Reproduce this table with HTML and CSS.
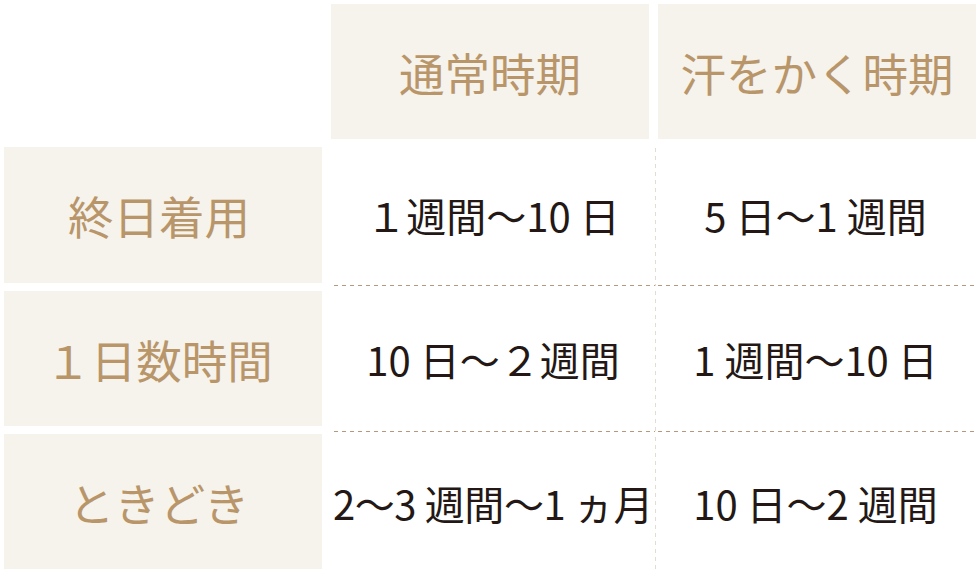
FILE: index.html
```html
<!DOCTYPE html>
<html lang="ja">
<head>
<meta charset="utf-8">
<link rel="stylesheet" href="styles.css">
</head>
<body>
<div class="table">
  <div class="corner"></div>
  <div class="head">通常時期</div>
  <div class="head">汗をかく時期</div>

  <div class="rowhead">終日着用</div>
  <div class="data c2 r1">１週間〜10 日</div>
  <div class="data c3 r1">5 日〜1 週間</div>

  <div class="rowhead">１日数時間</div>
  <div class="data c2 r2">10 日〜２週間</div>
  <div class="data c3 r2">1 週間〜10 日</div>

  <div class="rowhead">ときどき</div>
  <div class="data c2 r3 tight">2〜3 週間〜1 ヵ月</div>
  <div class="data c3 r3">10 日〜2 週間</div>
</div>
</body>
</html>
```

FILE: styles.css
```css
html, body {
  margin: 0;
  padding: 0;
  background: #ffffff;
  overflow: hidden;
}

body {
  font-family: "Noto Sans CJK JP", "Noto Sans", sans-serif;
}

.table {
  display: grid;
  grid-template-columns: 318px 318px 318px;
  grid-template-rows: 135px 136px 135px 135px;
  column-gap: 9px;
  row-gap: 8px;
  padding: 4px 0 0 4px;
}

.head,
.rowhead {
  background: #f6f2ec;
  color: #b8966a;
  font-size: 45.5px;
  font-weight: 400;
  display: flex;
  align-items: center;
  justify-content: center;
  white-space: nowrap;
}

.rowhead {
  padding-right: 8px;
}

.data {
  color: #231815;
  font-size: 40px;
  font-weight: 400;
  display: flex;
  align-items: center;
  justify-content: center;
  white-space: nowrap;
  background-image: repeating-linear-gradient(to right, #b39b7a 0 4px, transparent 4px 8px);
  background-repeat: no-repeat;
  background-size: 100% 1px;
  background-position: 3px 100%;
}

.data.c2 {
  margin-right: -6px;
}

.data.c3 {
  margin-left: -3px;
  background-image:
    repeating-linear-gradient(to right, #b39b7a 0 4px, transparent 4px 8px),
    repeating-linear-gradient(to bottom, #e3dcd0 0 4px, transparent 4px 8px);
  background-size: 100% 1px, 1px 100%;
  background-position: 3px 100%, 0 5px;
}

.data.r1 {
  margin-top: -4px;
  margin-bottom: -3px;
}

.data.r2 {
  margin-top: -5px;
  margin-bottom: -6px;
}

.data.r3 {
  margin-top: -2px;
  margin-bottom: -5px;
}

.data.c2.r3 {
  background-image: none;
}

.data.c3.r3 {
  background-size: 0 0, 1px 100%;
}

.data.tight {
  letter-spacing: -0.4px;
}
```
